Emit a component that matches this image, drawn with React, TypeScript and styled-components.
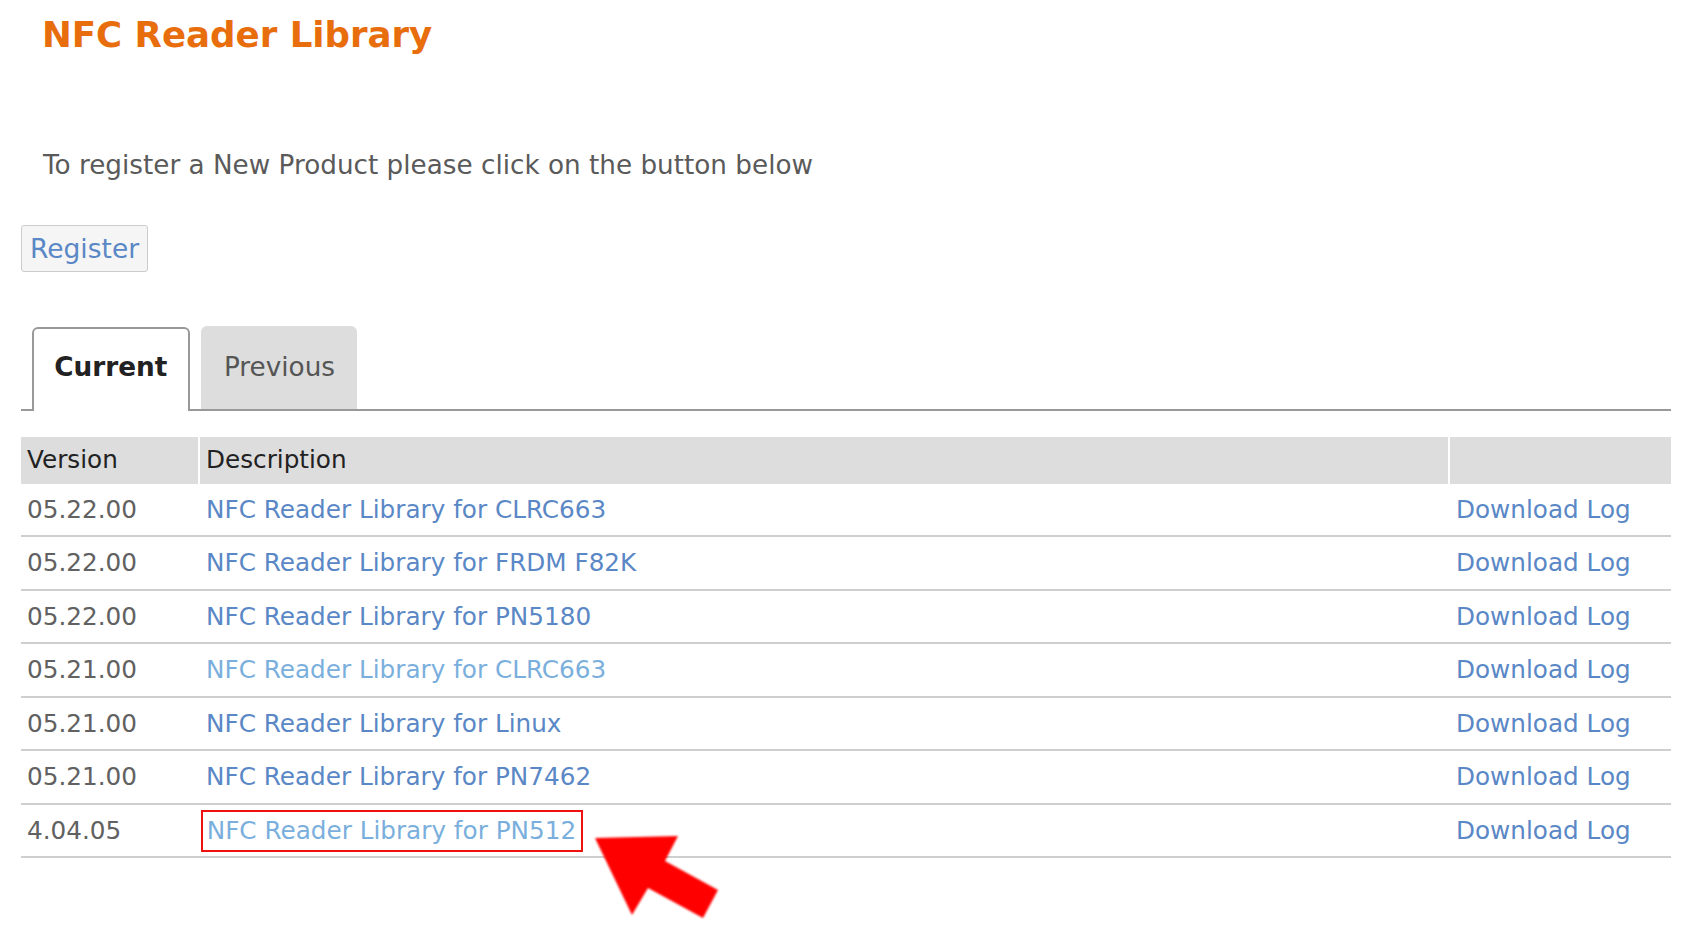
import React from "react";
import styled, { createGlobalStyle } from "styled-components";

const GlobalStyle = createGlobalStyle`
  html, body {
    margin: 0;
    padding: 0;
    background: #ffffff;
  }
  body {
    font-family: "DejaVu Sans", "Liberation Sans", sans-serif;
    color: #555555;
  }
`;

const Page = styled.div`
  position: relative;
  padding: 13.5px 30px 0 21px;
  min-height: 915px;
`;

const Title = styled.h1`
  margin: 0;
  padding-left: 21px;
  font-size: 35.6px;
  line-height: 42px;
  font-weight: 700;
  color: #e86d0c;
`;

const Intro = styled.p`
  margin: 94.3px 0 0;
  padding-left: 22px;
  font-size: 26.25px;
  line-height: 30px;
  color: #5a5a5a;
`;

const RegisterButton = styled.a`
  display: block;
  width: max-content;
  margin-top: 45px;
  padding: 0 8px;
  height: 45px;
  line-height: 45px;
  font-size: 26.5px;
  color: #5a87c5;
  text-decoration: none;
  background: #f5f5f5;
  border: 1px solid #cccccc;
  border-radius: 3px;
  cursor: pointer;
`;

const TabList = styled.div`
  display: flex;
  align-items: flex-end;
  gap: 11px;
  margin-top: 54.4px;
  padding-left: 11.3px;
  border-bottom: 2px solid #999999;
`;

const Tab = styled.div<{ $active?: boolean }>`
  font-size: 26.3px;
  line-height: 40px;
  border-radius: 6px 6px 0 0;
  ${(p) =>
    p.$active
      ? `
    font-weight: 700;
    color: #222222;
    background: #ffffff;
    border: 2px solid #999999;
    border-bottom: none;
    padding: 18px 21px 24.3px 20px;
    margin-bottom: -2px;
  `
      : `
    font-weight: 400;
    color: #555555;
    background: #dddddd;
    padding: 21px 22px 22.3px 22.5px;
  `}
`;

const Table = styled.div`
  margin-top: 25.7px;
  font-size: 24.7px;
`;

const Row = styled.div<{ $head?: boolean }>`
  display: grid;
  grid-template-columns: 177px 1fr 221px;
  column-gap: 2px;
  ${(p) =>
    p.$head
      ? `
    height: 46.6px;
  `
      : `
    min-height: 51.5px;
    border-bottom: 2px solid #cfcfcf;
  `}
`;

const HeadCell = styled.div`
  display: flex;
  align-items: center;
  padding: 0 6px;
  background: #dddddd;
  color: #222222;
  line-height: 36px;
`;

const Cell = styled.div`
  display: flex;
  align-items: center;
  padding: 0 6px;
  line-height: 36px;
  color: #616161;
`;

const Link = styled.a<{ $visited?: boolean }>`
  color: ${(p) => (p.$visited ? "#7aafdd" : "#5a87c5")};
  text-decoration: none;
  cursor: pointer;
`;

const Highlight = styled.span`
  display: inline-block;
  margin-left: -5.3px;
  padding: 0 5px 0 4px;
  height: 38px;
  line-height: 38px;
  border: 2px solid #f01010;
`;

const ArrowMark = styled.svg`
  position: absolute;
  left: 585px;
  top: 826px;
  width: 145px;
  height: 102px;
  overflow: visible;
`;

type Item = { version: string; name: string; visited?: boolean; marked?: boolean };

const items: Item[] = [
  { version: "05.22.00", name: "NFC Reader Library for CLRC663" },
  { version: "05.22.00", name: "NFC Reader Library for FRDM F82K" },
  { version: "05.22.00", name: "NFC Reader Library for PN5180" },
  { version: "05.21.00", name: "NFC Reader Library for CLRC663", visited: true },
  { version: "05.21.00", name: "NFC Reader Library for Linux" },
  { version: "05.21.00", name: "NFC Reader Library for PN7462" },
  { version: "4.04.05", name: "NFC Reader Library for PN512", visited: true, marked: true },
];

export default function App() {
  return (
    <>
      <GlobalStyle />
      <Page>
        <Title>NFC Reader Library</Title>
        <Intro>To register a New Product please click on the button below</Intro>
        <RegisterButton>Register</RegisterButton>
        <TabList>
          <Tab $active>Current</Tab>
          <Tab>Previous</Tab>
        </TabList>
        <Table>
          <Row $head>
            <HeadCell>Version</HeadCell>
            <HeadCell>Description</HeadCell>
            <HeadCell />
          </Row>
          {items.map((it, i) => (
            <Row key={i}>
              <Cell>{it.version}</Cell>
              <Cell>
                {it.marked ? (
                  <Highlight>
                    <Link $visited={it.visited}>{it.name}</Link>
                  </Highlight>
                ) : (
                  <Link $visited={it.visited}>{it.name}</Link>
                )}
              </Cell>
              <Cell>
                <Link>Download Log</Link>
              </Cell>
            </Row>
          ))}
        </Table>
        <ArrowMark viewBox="585 826 145 102">
          <defs>
            <filter id="soft" x="-10%" y="-10%" width="120%" height="120%">
              <feGaussianBlur stdDeviation="0.8" />
            </filter>
          </defs>
          <polygon
            points="595,838 678,836 665,861 718,890 703,918 648,888 632,915"
            fill="#ff0000"
            filter="url(#soft)"
          />
        </ArrowMark>
      </Page>
    </>
  );
}
